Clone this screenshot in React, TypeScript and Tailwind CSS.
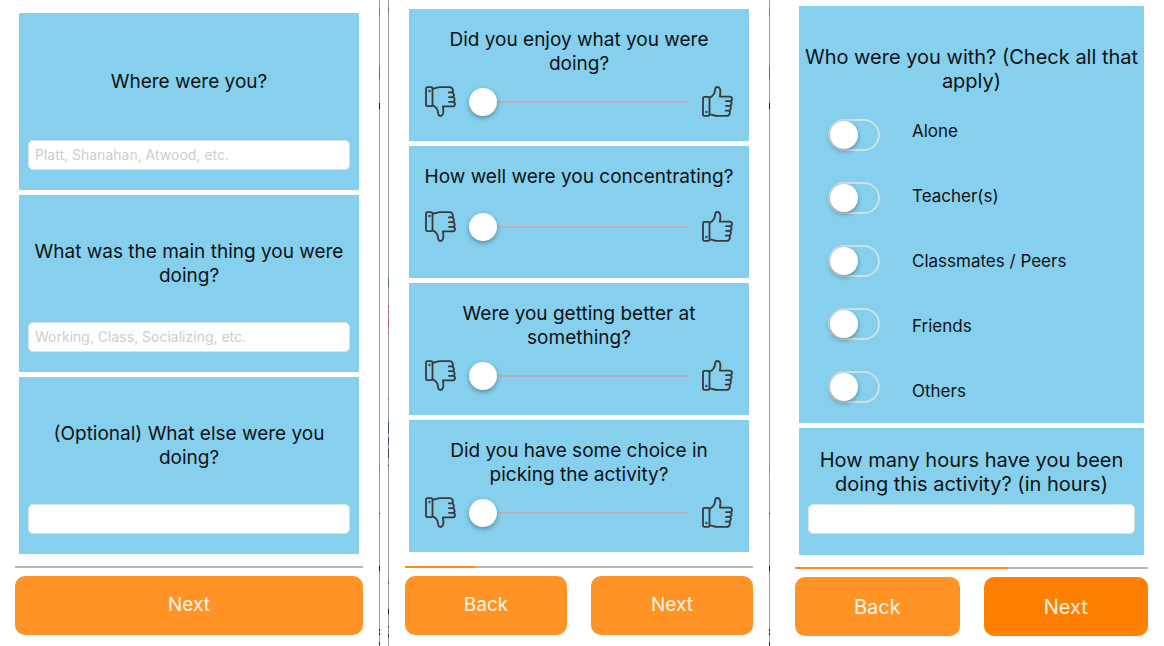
import { useState, type ReactNode } from "react";

function ThumbIcon({ down = false }: { down?: boolean }) {
  return (
    <svg
      viewBox="0 0 31 31"
      className={`size-[31px] shrink-0 ${down ? "-scale-y-100" : ""}`}
      fill="none"
      stroke="#37393c"
      strokeWidth="1.8"
      strokeLinecap="round"
      strokeLinejoin="round"
      aria-hidden="true"
    >
      <path d="M2.4 10.8H6.1Q7.5 10.8 7.5 12.2V28.4Q7.5 29.8 6.1 29.8H2.4Q1 29.8 1 28.4V12.2Q1 10.8 2.4 10.8Z" />
      <circle cx="4.3" cy="26" r="0.8" strokeWidth="1" />
      <path d="M7.6 11.6C11.4 10.2 12.7 7.6 13.1 4.2C13.2 2.3 13.7 1 15.3 1C17.9 1 18.7 3.8 18.3 7.4L17.9 10.6H27.3C29 10.6 30 11.5 30 12.8C30 14.3 29 15.2 27.6 15.2C29.2 15.4 29.8 16.4 29.6 17.7C29.4 19 28.5 19.8 27.2 19.8C28.6 20.1 29.1 21 28.9 22.3C28.7 23.6 27.9 24.5 26.7 24.6C27.9 25 28.2 25.8 27.9 27C27.5 28.9 26.4 29.9 24.6 29.9H15C12.3 29.9 10.2 28.3 7.6 28.3M24 15.2H27.6M24 19.8H27.2M23.7 24.6H26.7" />
    </svg>
  );
}

const plainDivider =
  "w-px self-stretch bg-[linear-gradient(#9a9a9a_0_9px,#5f7fa6_9px_16px,#9a9a9a_16px_66px,#66697a_66px_79px,#9a9a9a_79px_103px,#10182c_103px_109px,#9a9a9a_109px_466px,#6f8fb0_466px_474px,#9a9a9a_474px_513px,#111111_513px_514px,#9a9a9a_514px_566px,#1b1e28_566px_571px,#9a9a9a_571px_629px,#1b2438_629px_631px,#9a9a9a_631px_633px,#111111_633px_635px,#9a9a9a_635px_642px,#222222_642px_645px,#9a9a9a_645px)]";

const speckledDivider =
  "w-px self-stretch bg-[linear-gradient(#9a9a9a_0_7px,#65748c_7px_12px,#9a9a9a_12px_278px,#52707c_278px_287px,#9a9a9a_287px_306px,#a3455a_306px_308px,#9a9a9a_308px_311px,#b0454f_311px_313px,#9a9a9a_313px_318px,#b0507a_318px_326px,#9a9a9a_326px_332px,#b5544e_332px_334px,#9a9a9a_334px_398px,#5f8a5a_398px_400px,#9a9a9a_400px_422px,#35516b_422px_433px,#9a9a9a_433px_437px,#3b4878_437px_445px,#9a9a9a_445px_449px,#30455c_449px_458px,#9a9a9a_458px_465px,#222222_465px_466px,#9a9a9a_466px_582px,#41567a_582px_584px,#9a9a9a_584px_609px,#18253f_609px_614px,#9a9a9a_614px_626px,#34466a_626px_628px,#9a9a9a_628px_634px,#1f3050_634px_637px,#9a9a9a_637px)]";

function Question({ children }: { children: ReactNode }) {
  return <span className="block text-center leading-6">{children}</span>;
}

function TextBox({ id, placeholder }: { id: string; placeholder?: string }) {
  return (
    <input
      id={id}
      type="text"
      placeholder={placeholder}
      className="block h-[30px] w-full rounded-[5px] border border-[#d5e5eb] bg-white px-1.5 pb-0.5 text-[14px] outline-none placeholder:text-[#cdcdd0]"
    />
  );
}

function TextCard({ id, question, placeholder }: { id: string; question: string; placeholder?: string }) {
  return (
    <div className="bg-[#86d0ed] px-[9px] pt-[45px] pb-5">
      <label htmlFor={id} className="mb-[34px] flex min-h-12 items-center justify-center">
        <Question>{question}</Question>
      </label>
      <TextBox id={id} placeholder={placeholder} />
    </div>
  );
}

function SliderCard({ id, question }: { id: string; question: string }) {
  const [value, setValue] = useState(0);
  return (
    <div className="flex min-h-[132px] flex-col bg-[#86d0ed] pt-[19px]">
      <label htmlFor={id} className="px-3">
        <Question>{question}</Question>
      </label>
      <div className="flex flex-1 items-center gap-[13px] px-4 pb-3.5">
        <ThumbIcon down />
        <input
          id={id}
          type="range"
          min={0}
          max={100}
          value={value}
          onChange={(e) => setValue(Number(e.target.value))}
          className="h-7 min-w-0 flex-1 appearance-none bg-transparent outline-none [&::-webkit-slider-runnable-track]:h-0.5 [&::-webkit-slider-runnable-track]:bg-[#b8b1b3] [&::-webkit-slider-thumb]:-mt-[13px] [&::-webkit-slider-thumb]:size-7 [&::-webkit-slider-thumb]:appearance-none [&::-webkit-slider-thumb]:rounded-full [&::-webkit-slider-thumb]:bg-white [&::-webkit-slider-thumb]:shadow-[0_2px_5px_rgba(0,0,0,0.35)]"
        />
        <ThumbIcon />
      </div>
    </div>
  );
}

function Progress({ value }: { value: number }) {
  return (
    <div role="progressbar" aria-valuenow={value} aria-valuemin={0} aria-valuemax={100} className="h-0.5 bg-[#b5b5b5]">
      <div className="h-full bg-[#ff8a15]" style={{ width: `${value}%` }} />
    </div>
  );
}

function NavButton({ children, strong = false }: { children: ReactNode; strong?: boolean }) {
  return (
    <button
      type="button"
      className={`h-[59px] flex-1 rounded-[10px] text-white/90 ${strong ? "bg-[#ff8000]" : "bg-[#ff9326]"}`}
    >
      {children}
    </button>
  );
}

const companions = ["Alone", "Teacher(s)", "Classmates / Peers", "Friends", "Others"];

function CompanionsCard() {
  return (
    <fieldset className="bg-[#86d0ed] pt-[39px] pb-5">
      <legend className="float-left w-full">
        <Question>Who were you with? (Check all that apply)</Question>
      </legend>
      <div className="clear-both flex gap-8 pt-[26px] pl-[29px]">
        <div className="flex flex-col gap-[31px]">
          {companions.map((name, i) => (
            <input
              key={name}
              id={`with-${i}`}
              type="checkbox"
              className="block h-8 w-[52px] appearance-none rounded-full border-2 border-[#cfe0e8] before:block before:size-7 before:rounded-full before:bg-white before:shadow-[0_2px_5px_rgba(0,0,0,0.35)] checked:bg-green-500 checked:before:ml-5"
            />
          ))}
        </div>
        <div className="flex flex-col gap-[41px]">
          {companions.map((name, i) => (
            <label key={name} htmlFor={`with-${i}`} className="text-[17px] leading-6">
              {name}
            </label>
          ))}
        </div>
      </div>
    </fieldset>
  );
}

export default function App() {
  return (
    <main className="grid min-h-screen grid-cols-[380fr_390fr_394fr] bg-white font-['Inter',sans-serif] text-[19px] text-[#0b1216]">
      <section className="flex">
        <div className="min-w-0 flex-1 pt-[13px] pr-4 pl-[15px]">
          <div className="mx-1 flex flex-col gap-[5px]">
            <TextCard id="where" question="Where were you?" placeholder="Platt, Shanahan, Atwood, etc." />
            <TextCard
              id="main"
              question="What was the main thing you were doing?"
              placeholder="Working, Class, Socializing, etc."
            />
            <TextCard id="else" question="(Optional) What else were you doing?" />
          </div>
          <div className="mt-3 mb-2">
            <Progress value={0} />
          </div>
          <div className="flex gap-6">
            <NavButton>Next</NavButton>
          </div>
        </div>
        <div className={plainDivider} />
      </section>

      <section className="flex pl-2">
        <div className={speckledDivider} />
        <div className="min-w-0 flex-1 px-4 pt-[9px]">
          <div className="mx-1 flex flex-col gap-[5px]">
            <SliderCard id="enjoy" question="Did you enjoy what you were doing?" />
            <SliderCard id="focus" question="How well were you concentrating?" />
            <SliderCard id="better" question="Were you getting better at something?" />
            <SliderCard id="choice" question="Did you have some choice in picking the activity?" />
          </div>
          <div className="mt-3.5 mb-2">
            <Progress value={20} />
          </div>
          <div className="flex gap-6">
            <NavButton>Back</NavButton>
            <NavButton>Next</NavButton>
          </div>
        </div>
        <div className={plainDivider} />
      </section>

      <section className="pt-1.5 pr-4 pl-[25px] text-[20px]">
        <div className="mx-1 flex flex-col gap-[5px]">
          <CompanionsCard />
          <div className="bg-[#86d0ed] px-[9px] pt-5 pb-[21px]">
            <label htmlFor="hours" className="mb-2 block">
              <Question>How many hours have you been doing this activity? (in hours)</Question>
            </label>
            <TextBox id="hours" />
          </div>
        </div>
        <div className="mt-3 mb-2">
          <Progress value={60} />
        </div>
        <div className="flex gap-6">
          <NavButton>Back</NavButton>
          <NavButton strong>Next</NavButton>
        </div>
      </section>
    </main>
  );
}
